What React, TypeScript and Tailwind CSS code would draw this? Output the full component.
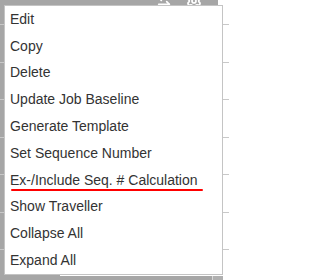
import { ArrowLeftRight, Settings } from 'lucide-react'

const menuItems = [
  'Edit',
  'Copy',
  'Delete',
  'Update Job Baseline',
  'Generate Template',
  'Set Sequence Number',
  'Ex-/Include Seq. # Calculation',
  'Show Traveller',
  'Collapse All',
  'Expand All',
]

const rows = [0, 1, 2, 3, 4, 5]

export default function App() {
  return (
    <div
      className="relative h-[280px] w-[229px] overflow-hidden bg-white"
      style={{ fontFamily: '"Liberation Sans", Arial, sans-serif' }}
    >
      {/* table behind the menu */}
      <div className="flex h-full flex-col">
        <div className="flex h-[24px] shrink-0 bg-[#a6a6a6]">
          <div className="ml-[156px] mt-[-7px] flex gap-[14px] text-white">
            <ArrowLeftRight size={16} strokeWidth={2.5} />
            <Settings size={16} strokeWidth={2.5} />
          </div>
          <div className="ml-auto w-[11px] bg-white" />
        </div>
        {rows.map((r) => (
          <div key={r} className="flex h-[37.5px] shrink-0 border-t border-[#c8c8c8]">
            <div className="w-[60px] bg-[#a6a6a6]" />
            <div className="flex-1" />
          </div>
        ))}
        <div className="flex flex-1 border-t border-[#c8c8c8]">
          <div className="w-[60px] bg-[#a6a6a6]" />
          <div className="flex-1" />
        </div>
        <div className="flex h-[4px] shrink-0">
          <div className="w-[212px] bg-[#a6a6a6]" />
          <div className="w-[1px] bg-[#d8d8d8]" />
          <div className="w-[10px] bg-[#b0b0b0]" />
          <div className="flex-1 bg-white" />
        </div>
      </div>

      {/* context menu */}
      <div className="absolute left-[4px] top-[5px] w-[219px] border border-[#c4c4c4] bg-white">
        {menuItems.map((item, i) => (
          <div
            key={item}
            className="relative flex h-[26.8px] items-center px-[5px] text-[14px] text-[#333333]"
          >
            {item}
            {i === 6 && (
              <span className="absolute left-[6px] top-[22px] h-[2px] w-[192px] rounded-full bg-[#ff0000]" />
            )}
          </div>
        ))}
      </div>
    </div>
  )
}
